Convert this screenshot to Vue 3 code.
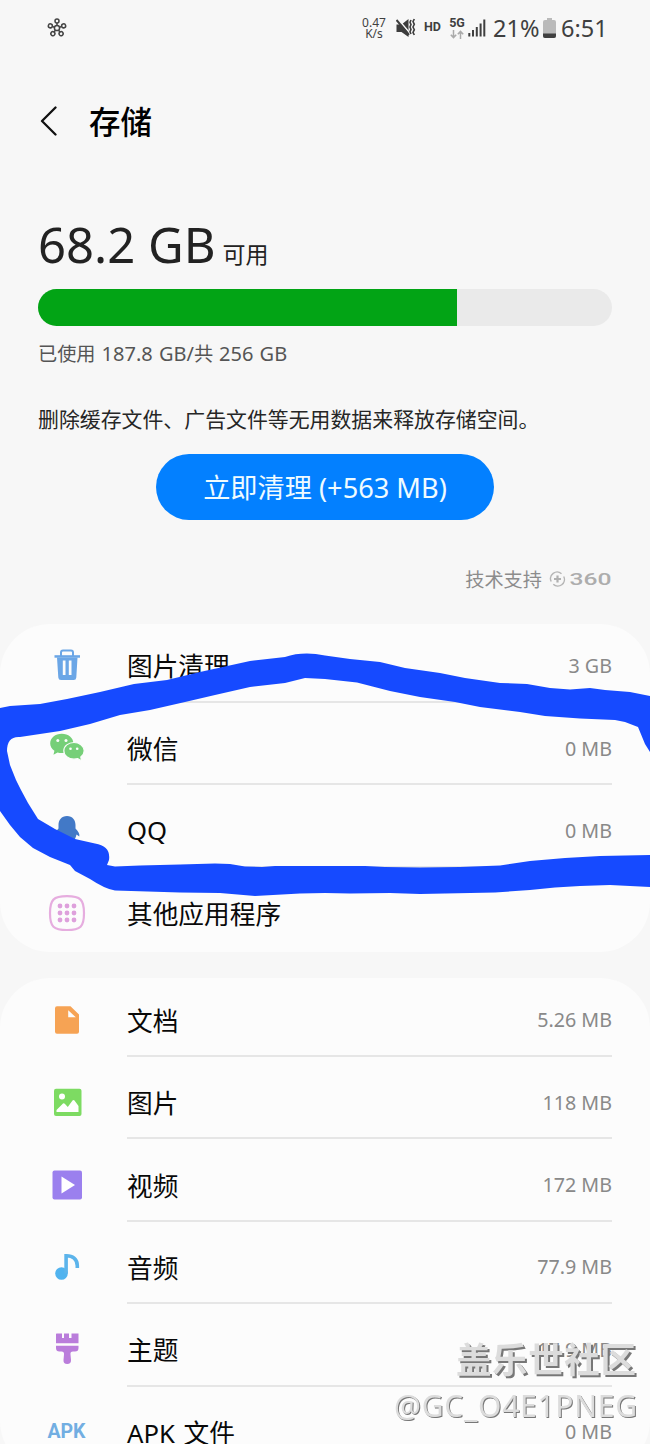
<script setup>
const cleanup = [
  { icon: 'trash', label: '图片清理', size: '3 GB' },
  { icon: 'wechat', label: '微信', size: '0 MB' },
  { icon: 'qq', label: 'QQ', size: '0 MB' },
  { icon: 'apps', label: '其他应用程序', size: '' },
]
const files = [
  { icon: 'doc', label: '文档', size: '5.26 MB' },
  { icon: 'image', label: '图片', size: '118 MB' },
  { icon: 'video', label: '视频', size: '172 MB' },
  { icon: 'audio', label: '音频', size: '77.9 MB' },
  { icon: 'theme', label: '主题', size: '17.9 MB' },
  { icon: 'apk', label: 'APK 文件', size: '0 MB' },
]
const groups = [cleanup, files]
const usedPercent = 73
const dots = [-7, 0, 7]
const arms = [0, 72, 144, 216, 288]
</script>

<template>
  <div class="screen">
    <header class="status">
      <svg class="hub" width="22" height="22" viewBox="-11 -11 22 22">
        <circle r="2.6" />
        <g v-for="a in arms" :key="a" :transform="`rotate(${a})`">
          <path d="M0-2.6V-5" /><circle cy="-7" r="2" />
        </g>
      </svg>
      <div class="speed"><span>0.47</span><span>K/s</span></div>
      <svg class="mute" width="20" height="20" viewBox="0 0 20 20">
        <path d="M.5 6.500H5.500L12.500 1V19L5.500 14H.5Z" fill="#3d3d3d" />
        <path d="M1.500 .5L15 16.500" stroke="#f7f7f7" stroke-width="1.600" />
        <path d="M.5 2L13 16.800" stroke="#3d3d3d" stroke-width="2" />
        <path d="M15 2l-1 2.300 1 2.300-1 2.400 1 2.400-1 2.300 1 2.300M18.300 1l-1.300 2.600 1.300 2.700-1.300 2.700 1.300 2.700-1.300 2.700 1.300 2.600" fill="none" stroke="#3d3d3d" stroke-width="1.600" />
      </svg>
      <span class="hd">HD</span>
      <div class="net">
        <span>5G</span>
        <svg width="14" height="9" viewBox="0 0 14 9"><path d="M3.5 0V7.5M.8 4.8l2.7 2.8 2.7-2.8M10.5 9V1.3M7.8 4.2l2.7-2.8 2.7 2.8" /></svg>
      </div>
      <svg class="bars" width="18" height="18" viewBox="0 0 18 18">
        <path d="M1.3 14v3.5M5 11v6.500M8.800 8v9.500M12.600 4.500v13M16.300 .5v17" />
      </svg>
      <span class="pct">21%</span>
      <svg class="battery" width="13" height="20" viewBox="0 0 13 20">
        <path d="M4 0h5v2h2q2 0 2 2v14q0 2-2 2H2q-2 0-2-2V4q0-2 2-2h2Z" fill="#bababa" />
        <path d="M0 15.500h13V18q0 2-2 2H2q-2 0-2-2Z" fill="#404040" />
      </svg>
      <span class="time">6:51</span>
    </header>

    <div class="title">
      <svg width="18" height="30" viewBox="0 0 18 30"><path d="M15.500 1.500L2 15l13.500 13.500" /></svg>
      <h1>存储</h1>
    </div>

    <section class="summary">
      <div class="free"><b>68.2 GB</b><span>可用</span></div>
      <div class="meter"><div class="used" :style="{ width: usedPercent + '%' }"></div></div>
      <p class="usage">已使用 <span>187.8 GB/</span>共 <span>256 GB</span></p>
      <p class="hint">删除缓存文件、广告文件等无用数据来释放存储空间。</p>
      <button class="clean">立即清理 (+563 MB)</button>
      <div class="support">
        <span>技术支持</span>
        <svg width="63" height="18" viewBox="0 0 63 18">
          <path d="M2.200 11.500A6.600 6.600 0 0 1 12.500 3.700M14.700 6.500A6.600 6.600 0 0 1 4.300 14.300" fill="none" stroke="#b5b5b5" stroke-width="1.400" />
          <path d="M8.500 5.500v7M5 9h7" stroke="#b0b0b0" stroke-width="2.200" />
          <text x="20.500" y="15" textLength="42" lengthAdjust="spacingAndGlyphs">360</text>
        </svg>
      </div>
    </section>

    <section v-for="(rows, g) in groups" :key="g" class="card">
      <div v-for="row in rows" :key="row.label" class="row">
        <div class="icon">
          <svg v-if="row.icon !== 'apk'" width="40" height="40" viewBox="-20 -20 40 40">
            <g v-if="row.icon === 'trash'" fill="#6ba6e6">
              <path d="M-6-9v-3.500q0-2 2-2h8q2 0 2 2V-9" fill="none" stroke="#6ba6e6" stroke-width="2" />
              <path d="M-12.500-9.800h25.500v2.500H-12.500Z" />
              <path fill-rule="evenodd" d="M-10-7.500H10.500L9.300 12.500q-.2 2.500-2.600 2.500H-6q-2.500 0-2.700-2.500ZM-4.200-4.500V10h2.700V-4.500ZM1.800-4.500V10H4.500V-4.500Z" />
            </g>
            <g v-else-if="row.icon === 'wechat'">
              <path d="M-5.200-14.300c6.500 0 11.600 4.200 11.600 9.700S1.300 5 -5.200 5c-1.500 0-2.900-.2-4.200-.6L-13.500 6.700l.9-4C-15.300.9-16.800-1.700-16.800-4.600c0-5.500 5.100-9.700 11.600-9.700Z" fill="#76cf78" />
              <path d="M7-5.500c5.700 0 10.200 3.700 10.200 8.300 0 2.500-1.300 4.700-3.400 6.300l.8 3.800-3.800-2.200c-1.200.3-2.500.5-3.800.5-5.700 0-10.200-3.700-10.200-8.400S1.300-5.500 7-5.500Z" fill="#76cf78" stroke="#fcfcfc" stroke-width="1.200" />
              <g fill="#fcfcfc"><circle cx="-9.200" cy="-7.500" r="1.500" /><circle cx="-1" cy="-7.500" r="1.500" /><circle cx="3.500" cy=".8" r="1.300" /><circle cx="10.200" cy=".8" r="1.300" /></g>
            </g>
            <path v-else-if="row.icon === 'qq'" fill="#4279c7" d="M0-14c5.500 0 8.500 4 8.500 9v3.500C11 1 13 4 12.300 6.500L9.500 4.500C8 11 5 14 0 14S-8 11-9.500 4.500l-3 2C-13 4-11 1-8.500-1.500V-5c0-5 3-9 8.500-9Z" />
            <g v-else-if="row.icon === 'apps'">
              <path d="M0-16.800c13.500 0 17 3.500 17 17S13.500 17 0 17-17 13.700-17 .2-13.500-16.800 0-16.800Z" fill="none" stroke="#e6addf" stroke-width="2.200" />
              <template v-for="y in dots" :key="y"><circle v-for="x in dots" :key="x" :cx="x" :cy="y" r="2.400" fill="#dea0dc" /></template>
            </g>
            <path v-else-if="row.icon === 'doc'" fill="#f6a354" fill-rule="evenodd" d="M-10-13.800H3.500L12-5.500V11.800q0 2-2 2H-10q-2 0-2-2V-11.800q0-2 2-2ZM1.200-9.800V-2.800H8.800Z" />
            <g v-else-if="row.icon === 'image'">
              <rect x="-13" y="-13.300" width="27.500" height="27.300" rx="2" fill="#7ddb62" />
              <circle cx="-5" cy="-5.500" r="3" fill="#fff" />
              <path d="M-10.500 10V8L-4 1.500Q-3 .8-2 2l2.800 3L5.500-1.500Q6.500-2.500 7.500-1.500L11.500 4V10Z" fill="#fff" />
            </g>
            <g v-else-if="row.icon === 'video'">
              <rect x="-14.500" y="-14.500" width="29.500" height="29" rx="2" fill="#9b80ee" />
              <path d="M-5.500-8.500L8 0-5.500 8.500Z" fill="#fff" />
            </g>
            <g v-else-if="row.icon === 'audio'">
              <circle cx="-5.500" cy="6.500" r="6.300" fill="#50b3ef" />
              <path d="M-.9 6.500V-11.300C5.500-11.500 10.300-8 10.300-1.200V1" fill="none" stroke="#5cb4eb" stroke-width="3.600" />
            </g>
            <path v-else fill="#ba7ddb" d="M-10.500-15.500h5.500v4.500h2v-4.500h5v4.500H4.500v-4.500H11.500V-5.700H-11V-15ZM-11-3.200H11.500V-1Q11.500 2.500 8 2.500H6Q3 2.500 3.500 5.500L4 11Q4.200 15 .2 15T-3.500 11L-3 5.500Q-2.700 2.500-5.500 2.500H-7.500Q-11 2.500-11-1Z" />
          </svg>
          <span v-else class="apk">APK</span>
        </div>
        <div class="body">
          <span class="label">{{ row.label }}</span>
          <span class="size">{{ row.size }}</span>
        </div>
      </div>
    </section>

    <svg class="overlay" width="650" height="1444" viewBox="0 0 650 1444">
      <path fill="#164aff" d="M0 708L10 706 40 704 67 699 100 692 134 684 167 680 200 672 250 661 285 657Q303 651 325 655.500L350 659 380 662 405 668 440 673 465 678 500 683 527 684 550 688 570 689.500 590 688 605 690 630 692 650 696V752L645 744 638 727 625 722 615 720 580 718.500 545 716 520 712 480 707 455 702 420 697 390 691 357 682.500 325 679 305 678 285 683 250 687 215 695 185 702 150 710 120 715 90 724 60 731 20 737Q7 736 7 751L10 765 16 780 21 790 28 803 38 819 55 829 75 839 95 843.500Q111 846 109 860L107 865 115 866.500 140 865.500 180 864.500 215 863.500 230 864 245 866.500 262 867 275 866 325 866 365 866 385 867 420 867.500 460 867 500 865.500 530 861 565 858 600 856 650 855V887L610 885 580 886 555 887.500 530 890 495 892.500 420 894 390 893 350 893.500 325 893 300 893.500 255 896 220 893 180 892.500 115 890.500Q105 889 90 879L75 871 70 865 50 857 33 848 20 837 10 825 0 811Z" />
      <g class="mark">
        <text class="community" x="456" y="1373" textLength="180">盖乐世社区</text>
        <text class="user" x="394" y="1417" textLength="243">@GC_O4E1PNEG</text>
      </g>
    </svg>
  </div>
</template>

<style>
body { background: #f7f7f7; overflow: hidden; }
</style>

<style scoped>
.screen {
  position: relative; width: 650px; height: 1444px; overflow: hidden;
  background: #f7f7f7; color: #111;
  font-family: "Noto Sans", "Noto Sans CJK SC", sans-serif;
}
.status { display: flex; align-items: center; height: 56px; padding: 0 0 0 46px; box-sizing: border-box; color: #3f3f3f; }
.hub { fill: none; stroke: #444; stroke-width: 1.500; }
.speed { display: flex; flex-direction: column; align-items: center; width: 26px; margin-left: 293px; font-size: 12px; line-height: 11px; }
.mute { margin: 0 0 0 9px; }
.hd { font: 700 12.500px/20px Roboto, sans-serif; width: 17px; margin: -2px 0 0 8px; }
.net { display: flex; flex-direction: column; align-items: center; width: 16px; margin-left: 8px; font: 700 12.500px/12px Roboto, sans-serif; }
.net svg { fill: none; stroke: #aaa; stroke-width: 1.500; margin-top: 1px; }
.bars { margin-left: 3px; fill: none; stroke: #3f3f3f; stroke-width: 2; }
.pct { width: 49px; margin: -1px 0 0 7px; font-size: 23.500px; white-space: nowrap; }
.battery { margin-left: 1px; margin-top: -1px; }
.time { margin: -1px 0 0 5px; font-size: 23.500px; }
.title { display: flex; align-items: center; gap: 31px; height: 64px; margin-top: 33px; padding-left: 40px; line-height: 64px; margin-bottom: 57px; }
.title svg { fill: none; stroke: #111; stroke-width: 2.300; stroke-linecap: round; stroke-linejoin: round; margin-top: -1px; }
h1 { margin: -2px 0 0; font-size: 31.500px; font-weight: 500; color: #000; font-family: "Noto Sans CJK SC", sans-serif; }
.summary { display: flex; flex-direction: column; height: 414px; padding: 0 38px; }
.free { height: 79px; display: flex; align-items: baseline; gap: 7px; line-height: 68px; color: #222; }
.free b { font-size: 49px; font-weight: 400; }
.free span { font-size: 23px; }
.meter { height: 37px; border-radius: 19px; background: #eaeaea; overflow: hidden; flex: none; }
.used { height: 100%; background: #02a415; }
p { margin: 0; white-space: nowrap; }
.usage { margin-top: 13px; font-size: 19.200px; line-height: 30px; color: #555; word-spacing: 1px; }
.usage span { font-size: 20px; }
.hint { margin-top: 34px; font-size: 20.900px; line-height: 32px; color: #262626; }
.clean { align-self: center; margin-top: 19px; width: 338px; height: 66px; flex: none; border: 0; border-radius: 33px; background: #0380ff; color: #effbff; font: 400 27.200px/68px "Noto Sans", "Noto Sans CJK SC", sans-serif; padding: 0; }
.support { display: flex; align-items: center; justify-content: flex-end; gap: 7px; height: 28px; margin-top: 45px; font-size: 19.200px; color: #8c8c8c; }
.support text { font: 500 17px Roboto, sans-serif; fill: #adadad; }
.card { margin-bottom: 26px; padding-bottom: 2px; border-radius: 50px; background: #fcfcfc; }
.row { display: flex; height: 82.400px; }
.row:first-child { height: 78.900px; }
.icon { width: 40px; margin: 0 40.500px 0 46.500px; padding-top: 8px; display: flex; align-items: center; justify-content: center; }
.body { flex: 1; display: flex; align-items: center; justify-content: space-between; margin-right: 38px; padding-top: 10px; border-bottom: 2px solid #e6e6e6; box-sizing: border-box; }
.row:first-child .icon { padding-top: 4px; }
.row:first-child .body { padding-top: 6px; }
.row:last-child .body { border-color: transparent; }
.label { font-size: 25.700px; color: #090909; word-spacing: 2px; }
.size { font-size: 19.700px; color: #898989; }
.apk { font: 700 19.500px Roboto, sans-serif; color: #72aee2; }
.overlay { position: absolute; inset: 0; }
.mark { fill: #dcdcdc; }
.community { font: 700 35.500px "Noto Sans CJK SC", sans-serif; filter: drop-shadow(2px 2px 0 #777); }
.user { font: 400 30px "Noto Sans", sans-serif; filter: drop-shadow(1.500px 1.500px 0 #777); }
</style>
